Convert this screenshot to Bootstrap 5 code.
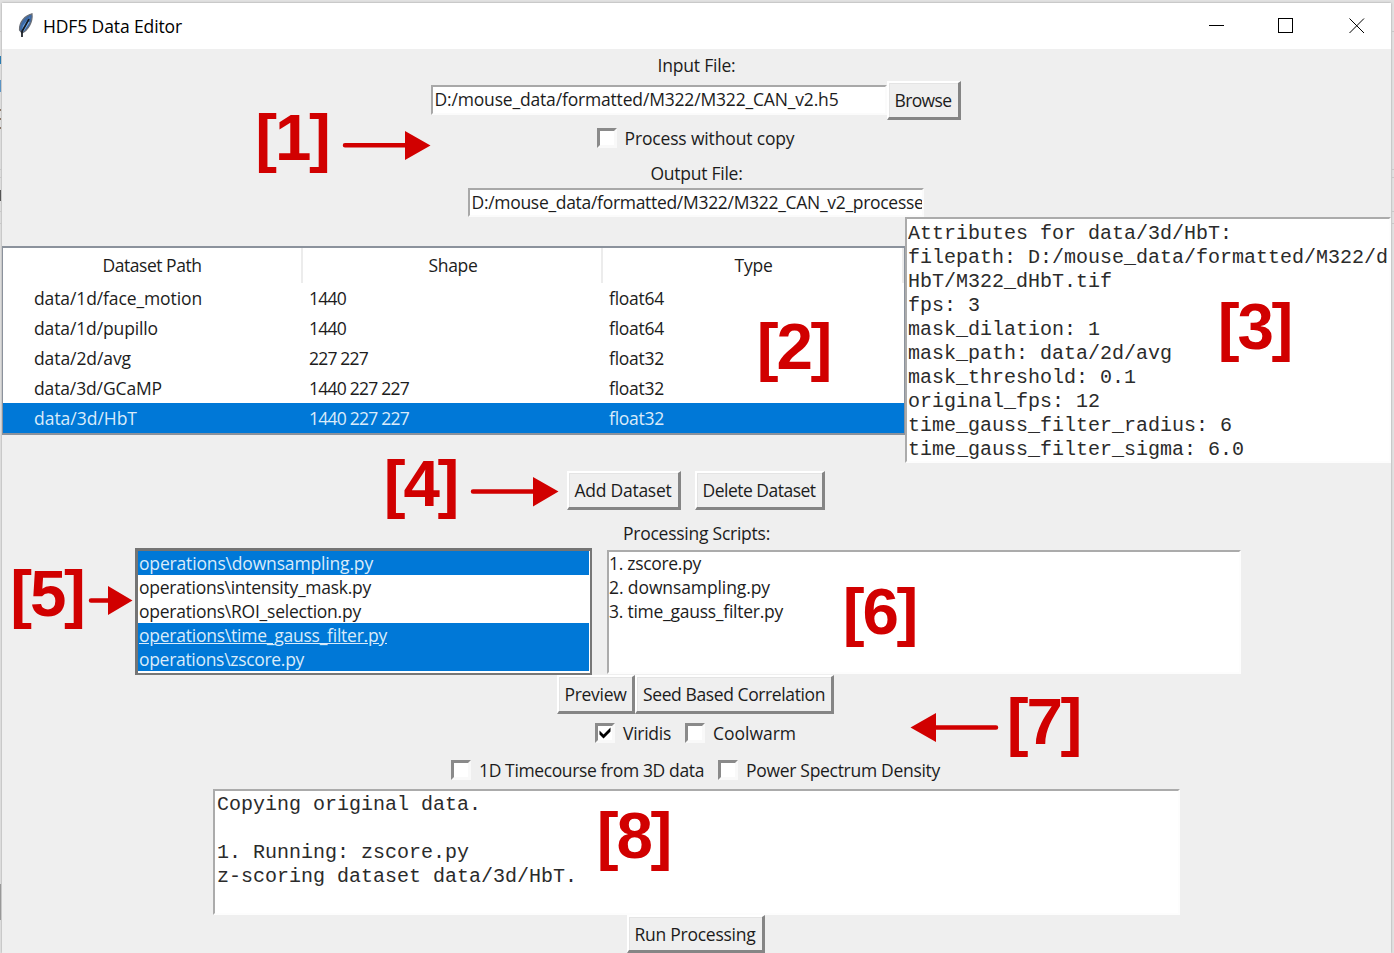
<!DOCTYPE html>
<html lang="en">
<head>
<meta charset="utf-8">
<title>HDF5 Data Editor</title>
<link href="https://cdn.jsdelivr.net/npm/bootstrap@5.3.0/dist/css/bootstrap.min.css" rel="stylesheet">
<style>
body{width:1394px;height:953px;overflow:hidden;background:#e1e1e1;font-family:"Open Sans","Noto Sans",sans-serif;font-size:17.5px;color:#1c1c1c;line-height:24px;padding:3px 3px 0 2px}
.win{width:1389px;height:950px;background:#efefef;box-shadow:0 0 2px #999}
.titlebar{height:46px;background:#fff;color:#000;padding:0 26px 0 15px}
.t{display:inline-block;white-space:pre}
.mid{margin-right:2px}
.entry{width:456px;height:30px;background:#fff;border:2px solid #fbfbfb;border-top-color:#a8a8a8;border-left-color:#a8a8a8;overflow:hidden;padding-left:2px;line-height:25px;white-space:nowrap}
.tkbtn{background:#efefef;border:solid;border-width:2px 3px 3px 2px;border-color:#fff #858585 #858585 #fff;border-radius:0;padding:0;height:39px;display:flex;align-items:center;justify-content:center;font-size:inherit;line-height:24px;color:inherit;box-shadow:inset 1px 1px 0 #e4e4e4}
.cb{width:20px;height:20px;background:#fff;border:3px solid;border-color:#8a8a8a #f9f9f9 #f9f9f9 #8a8a8a;display:block;flex:none}
.pane{background:#fff;border:2px solid #fdfdfd;border-top-color:#ababab;border-left-color:#ababab;overflow:hidden}
.mono{font-family:"Liberation Mono",monospace;font-size:20px;line-height:24px;white-space:pre-wrap;word-break:break-all;color:#2b2b2b;margin:0}
.tree{width:903px;height:189px;background:#fff;border:2px solid #8b929c;border-left-width:1px;border-right-width:1px}
.tree .hd,.tree .rw{display:grid;grid-template-columns:300px 300px 1fr}
.tree .hd{height:35px;line-height:34px;text-align:center}
.tree .hd>div{border-right:2px solid #ececec}
.tree .hd>div+div{padding-left:2px}
.tree .rw{height:30px;line-height:30px}
.tree .rw>div{padding-left:6px}
.tree .rw>div:first-child{padding-left:31px}
.sel{background:#0078d7;color:#d9ebfa}
.lb{width:457px;height:127px;background:#fff;border:3px solid #747474;border-right:2px solid #777;border-bottom:2px solid #777;padding:0 1px 0 0}
.lb>div{height:24px;line-height:24px;padding-left:1px}
.notes{left:0;top:0;pointer-events:none}
.notes text{letter-spacing:-2.2px}
</style>
</head>
<body class="position-relative">
<div class="win d-flex flex-column align-items-center">
  <div class="titlebar w-100 d-flex align-items-center">
    <svg width="18" height="26" viewBox="0 0 18 26"><path d="M15 .8C8 2.500 2 9 2.500 17L5 20C11 17.500 16 9 15 .8Z" fill="#3c6aa6" stroke="#6a6e76" stroke-width="1.200"/><path d="M13 3.500L6 12.500 5 16.500 9 12Z" fill="#6ba4e4"/><path d="M12 9L6 18" stroke="#7db0e8" stroke-width="1.500"/><path d="M12 6L5 18.500V24" stroke="#161a20" stroke-width="1.700" fill="none"/></svg>
    <span class="t" data-w="139" style="margin-left:8px">HDF5 Data Editor</span>
    <svg class="ms-auto" width="156" height="20" viewBox="0 0 156 20" fill="none" stroke="#000" stroke-width="1" shape-rendering="crispEdges"><path d="M-.5 9.500H14.500M69.500 2.500H83.500V16.500H69.500Z"/><path d="M140.500 2.500L155 17M155 2.500L140.500 17" shape-rendering="auto"/></svg>
  </div>
  <div class="d-flex align-items-center" style="height:32px"><span class="t" data-w="78">Input File:</span></div>
  <div class="mid d-flex align-items-center" style="height:38px">
    <div class="entry"><span class="t" data-w="404">D:/mouse_data/formatted/M322/M322_CAN_v2.h5</span></div>
    <button class="tkbtn" style="width:74px"><span class="t" data-w="57">Browse</span></button>
  </div>
  <div class="mid d-flex align-items-center gap-2" style="height:38px"><i class="cb"></i><span class="t" data-w="170">Process without copy</span></div>
  <div class="d-flex align-items-center" style="height:31px"><span class="t" data-w="92">Output File:</span></div>
  <div class="mid entry" style="height:29px"><span class="t" data-w="452">D:/mouse_data/formatted/M322/M322_CAN_v2_processe</span></div>
  <div class="d-flex align-items-center w-100">
    <div class="tree">
      <div class="hd"><div><span class="t" data-w="99">Dataset Path</span></div><div><span class="t" data-w="49">Shape</span></div><div><span class="t" data-w="38">Type</span></div></div>
      <div class="rw"><div><span class="t" data-w="168">data/1d/face_motion</span></div><div><span class="t" data-w="37">1440</span></div><div><span class="t" data-w="55">float64</span></div></div>
      <div class="rw"><div><span class="t" data-w="124">data/1d/pupillo</span></div><div><span class="t" data-w="37">1440</span></div><div><span class="t" data-w="55">float64</span></div></div>
      <div class="rw"><div><span class="t" data-w="97">data/2d/avg</span></div><div><span class="t" data-w="59">227 227</span></div><div><span class="t" data-w="55">float32</span></div></div>
      <div class="rw"><div><span class="t" data-w="128">data/3d/GCaMP</span></div><div><span class="t" data-w="100">1440 227 227</span></div><div><span class="t" data-w="55">float32</span></div></div>
      <div class="rw sel"><div><span class="t" data-w="103">data/3d/HbT</span></div><div><span class="t" data-w="100">1440 227 227</span></div><div><span class="t" data-w="55">float32</span></div></div>
    </div>
    <div class="pane flex-fill" style="height:246px;padding:3px 0 0 1px"><pre class="mono" style="overflow:hidden">Attributes for data/3d/HbT:
filepath: D:/mouse_data/formatted/M322/d
HbT/M322_dHbT.tif
fps: 3
mask_dilation: 1
mask_path: data/2d/avg
mask_threshold: 0.1
original_fps: 12
time_gauss_filter_radius: 6
time_gauss_filter_sigma: 6.0</pre></div>
  </div>
  <div class="mid d-flex align-items-center" style="height:54px;gap:14px">
    <button class="tkbtn" style="width:114px"><span class="t" data-w="97">Add Dataset</span></button>
    <button class="tkbtn" style="width:130px"><span class="t" data-w="113">Delete Dataset</span></button>
  </div>
  <div class="d-flex align-items-center" style="height:31px"><span class="t" data-w="147">Processing Scripts:</span></div>
  <div class="d-flex align-items-center" style="gap:15px;margin-right:17px">
    <div class="lb">
      <div class="sel"><span class="t" data-w="234">operations\downsampling.py</span></div>
      <div><span class="t" data-w="232">operations\intensity_mask.py</span></div>
      <div><span class="t" data-w="222">operations\ROI_selection.py</span></div>
      <div class="sel"><span class="t text-decoration-underline" data-w="248">operations\time_gauss_filter.py</span></div>
      <div class="sel"><span class="t" data-w="165">operations\zscore.py</span></div>
    </div>
    <div class="pane" style="width:634px;height:124px">
      <div style="margin-top:-1px"><span class="t" data-w="92">1. zscore.py</span></div>
      <div><span class="t" data-w="161">2. downsampling.py</span></div>
      <div><span class="t" data-w="174">3. time_gauss_filter.py</span></div>
    </div>
  </div>
  <div class="mid d-flex">
    <button class="tkbtn" style="width:78px"><span class="t" data-w="62">Preview</span></button>
    <button class="tkbtn" style="width:199px"><span class="t" data-w="182">Seed Based Correlation</span></button>
  </div>
  <div class="mid d-flex align-items-center gap-2" style="height:37px">
    <i class="cb"><svg class="d-block" width="14" height="14" viewBox="0 0 14 14"><path d="M1.500 4.500L5.500 8.500 12.500 1.500V5.500L5.500 12.500 1.500 8.500Z"/></svg></i><span class="t" data-w="48">Viridis</span>
    <i class="cb" style="margin-left:6px"></i><span class="t" data-w="83">Coolwarm</span>
  </div>
  <div class="mid d-flex align-items-center gap-2" style="height:38px">
    <i class="cb"></i><span class="t" data-w="225">1D Timecourse from 3D data</span>
    <i class="cb" style="margin-left:6px"></i><span class="t" data-w="194">Power Spectrum Density</span>
  </div>
  <div class="pane" style="width:967px;height:126px;padding:2px 0 0 2px"><pre class="mono">Copying original data.

1. Running: zscore.py
z-scoring dataset data/3d/HbT.</pre></div>
  <button class="mid tkbtn" style="width:138px;height:38px"><span class="t" data-w="121">Run Processing</span></button>
</div>
<svg class="notes position-absolute" width="1394" height="953" viewBox="0 0 1394 953">
  <g fill="none" stroke="#c8c8c8"><path d="M0 31.500H2M0 169.500H2M0 177.500H2M0 211.500H2M0 223.500H2M1391.500 31.500H1394M1391.500 169.500H1394M1391.500 177.500H1394M1391.500 211.500H1394M1391.500 223.500H1394"/><path d="M.5 56V64" stroke="#2a7bb0"/><path d="M.5 80V92" stroke="#5b94c4"/><path d="M.5 109V129" stroke="#8a7565" stroke-dasharray="2 7"/><path d="M.5 190V201" stroke="#555"/><path d="M.5 884V920" stroke="#999"/></g>
  <g fill="#d10000" font-family="Liberation Sans, Arial, sans-serif" font-weight="700" font-size="65.500" text-anchor="middle">
    <text x="292" y="160">[1]</text><text x="793.500" y="369">[2]</text><text x="1254.500" y="348.500">[3]</text><text x="420.500" y="506">[4]</text>
    <text x="47" y="616">[5]</text><text x="879.500" y="634">[6]</text><text x="1043.500" y="743.500">[7]</text><text x="633.500" y="858">[8]</text>
  </g>
  <g fill="#d10000" stroke="#d10000" stroke-linecap="round" stroke-width="4.500">
    <path d="M345 145.300H405M473 491.500H533M91 600.500H110M996 727.500H936"/>
    <path stroke="none" d="M405 131V160L430.500 145.500ZM533 477V506.500L558.500 491.500ZM108 586V615L132.500 600.500ZM936 713V742L910.500 727.500Z"/>
  </g>
</svg>
<script src="https://cdn.jsdelivr.net/npm/bootstrap@5.3.0/dist/js/bootstrap.bundle.min.js"></script>
<script>
// Track each caption so it keeps its nominal width in the dialog font.
document.querySelectorAll('[data-w]').forEach(e => {
  const gap = (e.dataset.w - e.getBoundingClientRect().width) / e.textContent.length;
  e.style.letterSpacing = gap.toFixed(3) + 'px';
});
</script>
</body>
</html>
